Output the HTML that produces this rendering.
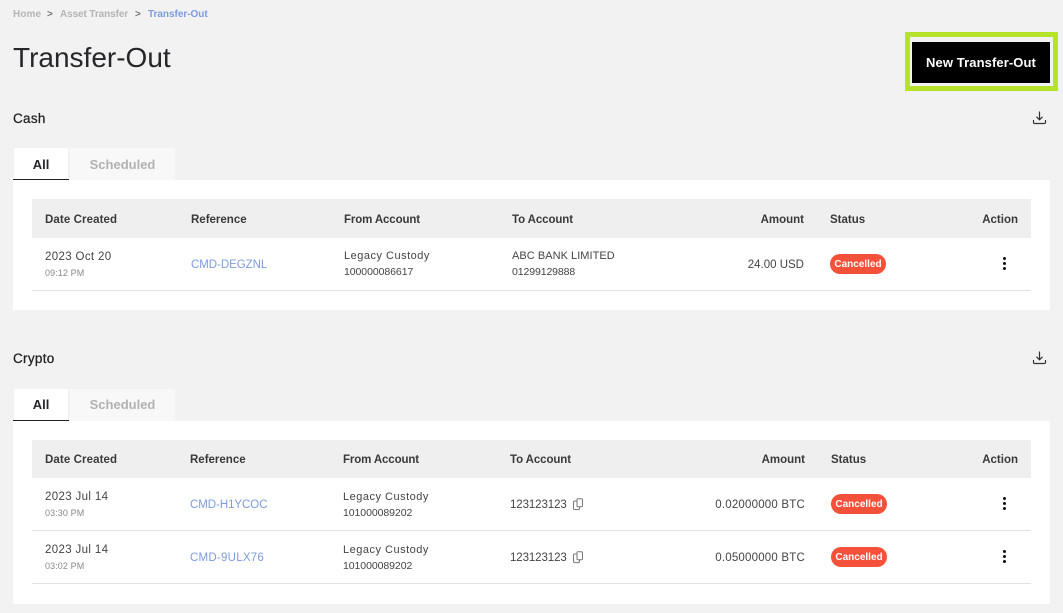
<!DOCTYPE html>
<html lang="en"><head><meta charset="utf-8"><title>Transfer-Out</title>
<style>
html,body{margin:0;padding:0;width:1063px;height:613px;overflow:hidden;background:#f2f2f2}
body{position:relative;font-family:"Liberation Sans",sans-serif;color:#333}
.a{position:absolute}
.t{position:absolute;white-space:nowrap;line-height:16px;margin-top:1px}
.r{text-align:right}
.h{font-size:11.5px;font-weight:bold;color:#3a3a3a;letter-spacing:0}
.d{font-size:11.5px;color:#444;letter-spacing:.35px}
.s{font-size:9px;color:#888;letter-spacing:.1px;margin-top:0}
.n{font-size:10.5px;color:#444;letter-spacing:-.07px}
.lg{font-size:11px;letter-spacing:.5px}
.l{font-size:11.5px;color:#7d9be0;letter-spacing:-.05px}
.b{position:absolute;background:#f4503a;border-radius:10px;color:#fff;font-size:10px;font-weight:bold;text-align:center;line-height:21px;height:20px;width:56px;letter-spacing:0}
.sec{font-size:13.5px;color:#222;letter-spacing:.3px;-webkit-text-stroke:.25px #222}
.tab{font-size:13px;font-weight:bold;text-align:center;line-height:32px;height:32px;position:absolute;letter-spacing:0}
.dot{position:absolute;width:3px;height:3px;border-radius:50%;background:#111}
</style></head><body>

<div class="t" style="left:13px;top:6px;font-size:10px;font-weight:bold;color:#b4b4b4;letter-spacing:.1px">Home</div>
<div class="t" style="left:47px;top:6px;font-size:10px;font-weight:bold;color:#777">&gt;</div>
<div class="t" style="left:60px;top:6px;font-size:10px;font-weight:bold;color:#b4b4b4;letter-spacing:-.1px">Asset Transfer</div>
<div class="t" style="left:135px;top:6px;font-size:10px;font-weight:bold;color:#777">&gt;</div>
<div class="t" style="left:148px;top:6px;font-size:10px;font-weight:bold;color:#7d9be0;letter-spacing:-.03px">Transfer-Out</div>

<div class="t" style="left:13px;top:41px;font-size:28px;line-height:32px;color:#26262b;letter-spacing:0">Transfer-Out</div>

<div class="a" style="left:905px;top:32px;width:153px;height:59px;box-sizing:border-box;border:5px solid #b5e32a;background:#f2f2f2"></div>
<div class="a" style="left:912px;top:42px;width:138px;height:41px;background:#000;color:#fff;font-size:13px;font-weight:bold;line-height:42px;text-align:center;letter-spacing:.1px">New Transfer-Out</div>

<!-- Cash -->
<div class="t sec" style="left:13px;top:110px">Cash</div>
<svg class="a" style="left:1032px;top:110px" width="15" height="15" viewBox="0 0 15 15" fill="none" stroke="#333" stroke-width="1.2"><path d="M7.5 1.5V9.5M4.5 6.8L7.5 9.8L10.5 6.8M1.5 10V12.2Q1.5 13.5 3 13.5H12Q13.5 13.5 13.5 12.2V10"/></svg>

<div class="tab" style="left:14px;top:148px;width:54px;background:#fff;color:#26262b;line-height:33px">All</div>
<div class="tab" style="left:70px;top:148px;width:105px;background:#f8f8f8;color:#b2b2b2;line-height:33px">Scheduled</div>
<div class="a" style="left:13px;top:180px;width:1037px;height:130px;background:#fff"></div>
<div class="a" style="left:13px;top:179px;width:56px;height:1px;background:#222"></div>

<div class="a" style="left:32px;top:199px;width:999px;height:39px;background:#efefef"></div>
<div class="t h" style="left:45px;top:211px;letter-spacing:.1px">Date Created</div>
<div class="t h" style="left:191px;top:211px">Reference</div>
<div class="t h" style="left:344px;top:211px;letter-spacing:-.13px">From Account</div>
<div class="t h" style="left:512px;top:211px;letter-spacing:-.1px">To Account</div>
<div class="t h r" style="right:259px;top:211px">Amount</div>
<div class="t h" style="left:830px;top:211px">Status</div>
<div class="t h r" style="right:45px;top:211px">Action</div>

<div class="t d" style="left:45px;top:248px">2023 Oct 20</div>
<div class="t s" style="left:45px;top:265px">09:12 PM</div>
<div class="t l" style="left:191px;top:256px">CMD-DEGZNL</div>
<div class="t n lg" style="left:344px;top:247px">Legacy Custody</div>
<div class="t n" style="left:344px;top:263px">100000086617</div>
<div class="t n" style="left:512px;top:247px;font-size:11px;letter-spacing:.04px">ABC BANK LIMITED</div>
<div class="t n" style="left:512px;top:263px;letter-spacing:-.1px">01299129888</div>
<div class="t d r" style="right:259px;top:256px;letter-spacing:0">24.00 USD</div>
<div class="b" style="left:830px;top:254px">Cancelled</div>
<div class="dot" style="left:1003px;top:257px"></div><div class="dot" style="left:1003px;top:262px"></div><div class="dot" style="left:1003px;top:267px"></div>
<div class="a" style="left:32px;top:290px;width:999px;height:1px;background:#e2e2e2"></div>

<!-- Crypto -->
<div class="t sec" style="left:13px;top:350px">Crypto</div>
<svg class="a" style="left:1032px;top:350px" width="15" height="15" viewBox="0 0 15 15" fill="none" stroke="#333" stroke-width="1.2"><path d="M7.5 1.5V9.5M4.5 6.8L7.5 9.8L10.5 6.8M1.5 10V12.2Q1.5 13.5 3 13.5H12Q13.5 13.5 13.5 12.2V10"/></svg>

<div class="tab" style="left:14px;top:389px;width:54px;background:#fff;color:#26262b">All</div>
<div class="tab" style="left:70px;top:389px;width:105px;background:#f8f8f8;color:#b2b2b2">Scheduled</div>
<div class="a" style="left:13px;top:421px;width:1037px;height:183px;background:#fff"></div>
<div class="a" style="left:13px;top:420px;width:56px;height:1px;background:#222"></div>

<div class="a" style="left:32px;top:440px;width:999px;height:38px;background:#efefef"></div>
<div class="t h" style="left:45px;top:451px;letter-spacing:.1px">Date Created</div>
<div class="t h" style="left:190px;top:451px">Reference</div>
<div class="t h" style="left:343px;top:451px;letter-spacing:-.13px">From Account</div>
<div class="t h" style="left:510px;top:451px;letter-spacing:-.1px">To Account</div>
<div class="t h r" style="right:258px;top:451px">Amount</div>
<div class="t h" style="left:831px;top:451px">Status</div>
<div class="t h r" style="right:45px;top:451px">Action</div>

<div class="t d" style="left:45px;top:488px">2023 Jul 14</div>
<div class="t s" style="left:45px;top:505px">03:30 PM</div>
<div class="t l" style="left:190px;top:496px">CMD-H1YCOC</div>
<div class="t n lg" style="left:343px;top:488px">Legacy Custody</div>
<div class="t n" style="left:343px;top:504px">101000089202</div>
<div class="t d" style="left:510px;top:496px;letter-spacing:-.1px">123123123</div>
<svg class="a" style="left:572px;top:498px" width="12" height="13" viewBox="0 0 12 13" fill="none" stroke="#777" stroke-width="1"><path d="M5 1.5Q5 .7 5.8 .7H9.2Q10.5 .7 10.5 2V7.5Q10.5 8.8 9.2 8.8H5.8Q5 8.8 5 8V1.5ZM5 3H2.8Q1.5 3 1.5 4.3V10.2Q1.5 11.6 2.8 11.6H6.2Q7.5 11.6 7.5 10.2V8.8"/></svg>
<div class="t d r" style="right:258px;top:496px;letter-spacing:.2px">0.02000000 BTC</div>
<div class="b" style="left:831px;top:494px">Cancelled</div>
<div class="dot" style="left:1003px;top:497px"></div><div class="dot" style="left:1003px;top:502px"></div><div class="dot" style="left:1003px;top:507px"></div>
<div class="a" style="left:32px;top:530px;width:999px;height:1px;background:#e2e2e2"></div>

<div class="t d" style="left:45px;top:541px">2023 Jul 14</div>
<div class="t s" style="left:45px;top:558px">03:02 PM</div>
<div class="t l" style="left:190px;top:549px;letter-spacing:.25px">CMD-9ULX76</div>
<div class="t n lg" style="left:343px;top:541px">Legacy Custody</div>
<div class="t n" style="left:343px;top:557px">101000089202</div>
<div class="t d" style="left:510px;top:549px;letter-spacing:-.1px">123123123</div>
<svg class="a" style="left:572px;top:551px" width="12" height="13" viewBox="0 0 12 13" fill="none" stroke="#777" stroke-width="1"><path d="M5 1.5Q5 .7 5.8 .7H9.2Q10.5 .7 10.5 2V7.5Q10.5 8.8 9.2 8.8H5.8Q5 8.8 5 8V1.5ZM5 3H2.8Q1.5 3 1.5 4.3V10.2Q1.5 11.6 2.8 11.6H6.2Q7.5 11.6 7.5 10.2V8.8"/></svg>
<div class="t d r" style="right:258px;top:549px;letter-spacing:.2px">0.05000000 BTC</div>
<div class="b" style="left:831px;top:547px">Cancelled</div>
<div class="dot" style="left:1003px;top:550px"></div><div class="dot" style="left:1003px;top:555px"></div><div class="dot" style="left:1003px;top:560px"></div>
<div class="a" style="left:32px;top:583px;width:999px;height:1px;background:#e2e2e2"></div>

</body></html>
